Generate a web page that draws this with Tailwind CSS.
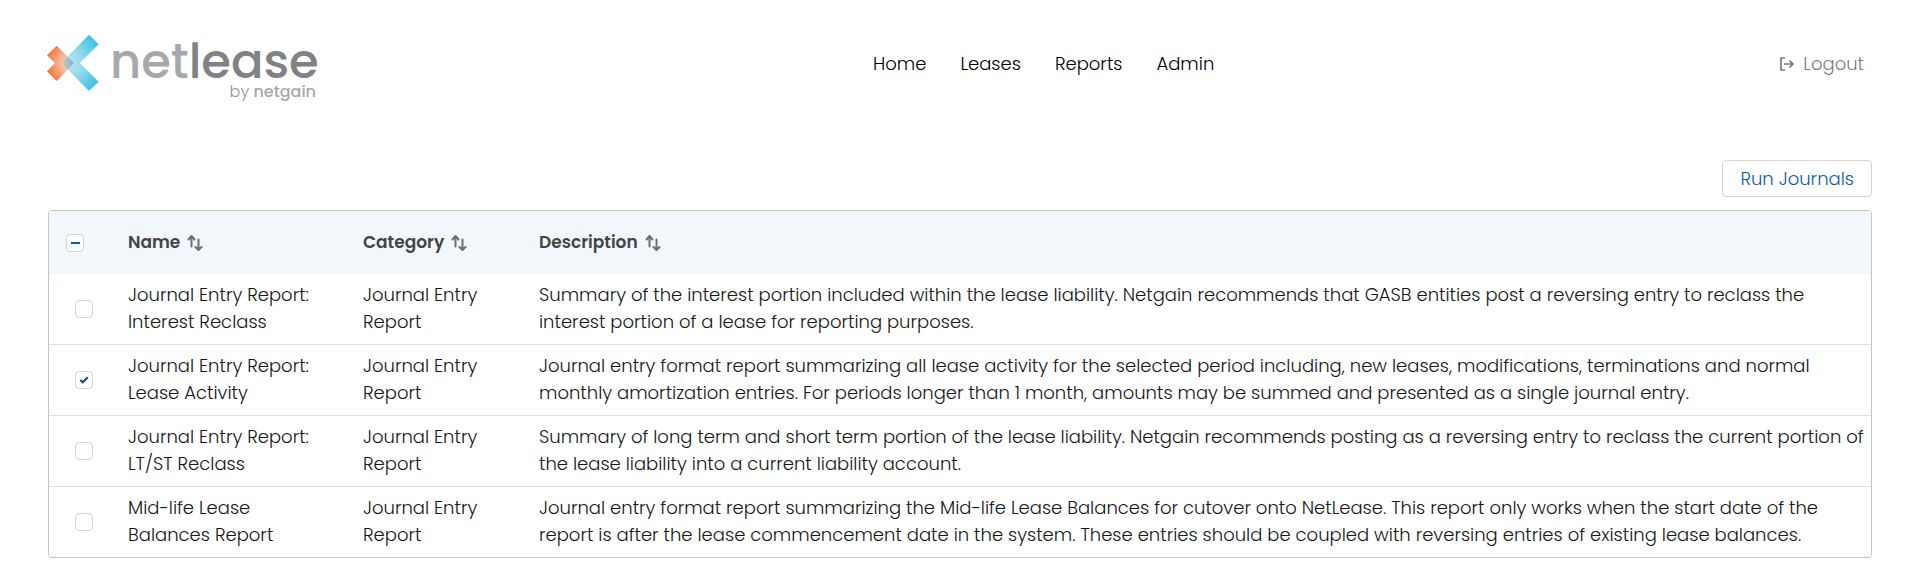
<!DOCTYPE html>
<html lang="en">
<head>
<meta charset="utf-8">
<title>NetLease Reports</title>
<script src="https://cdn.jsdelivr.net/npm/@tailwindcss/browser@4"></script>
</head>
<body class="bg-white font-[Poppins,Inter,'Open_Sans',sans-serif] text-[18px] font-light text-[#161616]">
<svg class="hidden" aria-hidden="true">
  <symbol id="sort" viewBox="0 0 18 18"><path fill="none" stroke="currentColor" stroke-width="2" stroke-linecap="round" stroke-linejoin="round" d="M5.500 12.500V2.500M2.500 5.500l3-3.500L8.500 5.500M12.500 5.500v10M9.500 13l3 3 3-3"/></symbol>
</svg>
<header class="flex h-[130px] items-center justify-between pr-14 pl-[46px]">
  <a href="#" aria-label="netlease by netgain" class="block">
    <svg width="272" height="74" viewBox="46 28 272 74" class="overflow-visible">
      <defs>
        <radialGradient id="blue" gradientUnits="userSpaceOnUse" cx="67" cy="63" r="34"><stop offset="0" stop-color="#b9e6f1"/><stop offset=".4" stop-color="#9bdcec"/><stop offset="1" stop-color="#48c4e8"/></radialGradient>
        <radialGradient id="orange" gradientUnits="userSpaceOnUse" cx="70" cy="63" r="25"><stop offset="0" stop-color="#fbd5c3"/><stop offset=".4" stop-color="#f8b595"/><stop offset="1" stop-color="#f36d2f"/></radialGradient>
        <linearGradient id="mix" x1="0" x2="1"><stop offset="0" stop-color="#dcc4b8"/><stop offset="1" stop-color="#7fb4c4"/></linearGradient>
      </defs>
      <path fill="url(#orange)" d="M56.700 45.700 74 63 56.700 81 47 71.300 55 63 47 55.300Z"/>
      <path fill="url(#blue)" d="M89 34.700 98.700 44.300 79.700 63 98.700 81.700 89 91 61.300 63Z"/>
      <path fill="url(#mix)" d="M67.700 56.700 74 63 67.700 69.500 61.300 63Z"/>
      <text x="110" y="78" font-size="48" font-weight="500" fill="#a6a9ac">net<tspan fill="#808285">lease</tspan></text>
      <text x="316" y="97" text-anchor="end" font-size="16" font-weight="300" fill="#939598">by <tspan font-weight="500" fill="#a6a9ac">netgain</tspan></text>
    </svg>
  </a>
  <nav class="flex gap-[34px] pr-2.5 pb-[3px] text-black">
    <a href="#">Home</a><a href="#">Leases</a><a href="#">Reports</a><a href="#">Admin</a>
  </nav>
  <a href="#" class="flex items-center gap-2 pb-[3px] text-[#7c7c7c]">
    <svg width="16" height="16" viewBox="0 0 16 16" fill="none" stroke="currentColor" stroke-width="1.700"><path d="M6 2H2v12h4M5 8h9M10.500 4.500 14 8l-3.500 3.500"/></svg>
    Logout
  </a>
</header>
<main class="px-12 pt-[30px]">
  <div class="flex justify-end">
    <button type="button" class="h-[37px] rounded border border-[#d4d4d4] px-[17px] pb-[1px] text-[#0a5cad]">Run Journals</button>
  </div>
  <div class="mt-[13px] overflow-hidden rounded border border-[#c4c4c4]">
    <table class="w-full table-fixed border-collapse text-left leading-[27px]">
      <colgroup><col class="w-[63px]"><col class="w-[235px]"><col class="w-[176px]"><col></colgroup>
      <thead class="h-[63px] bg-[#f2f7fb] text-[17px] text-[#444]">
        <tr>
          <th class="pl-[17px]"><label class="relative grid size-[18px] place-items-center"><input type="checkbox" aria-label="Select all reports" class="absolute inset-0 appearance-none rounded border border-[#d4d4d4] bg-white"><span class="relative h-[2px] w-[9px] bg-[#0a5cad]"></span></label></th>
          <th class="pl-4 font-semibold"><button type="button" class="flex items-center gap-1.5">Name <svg class="size-[18px] text-[#706e6b]"><use href="#sort"/></svg></button></th>
          <th class="pl-4 font-semibold"><button type="button" class="flex items-center gap-1.5">Category <svg class="size-[18px] text-[#706e6b]"><use href="#sort"/></svg></button></th>
          <th class="pl-4 font-semibold"><button type="button" class="flex items-center gap-1.5">Description <svg class="size-[18px] text-[#706e6b]"><use href="#sort"/></svg></button></th>
        </tr>
      </thead>
      <tbody class="divide-y divide-[#e0e0e0]">
        <tr>
          <td class="pl-[26px]"><input type="checkbox" aria-label="Select Interest Reclass" class="block size-[18px] appearance-none rounded border border-[#d4d4d4]"></td>
          <td class="pt-[7px] pb-[9px] pl-4">Journal Entry Report:<br>Interest Reclass</td>
          <td class="pt-[7px] pb-[9px] pl-4">Journal Entry<br>Report</td>
          <td class="pt-[7px] pb-[9px] pl-4">Summary of the interest portion included within the lease liability. Netgain recommends that GASB entities post a reversing entry to reclass the<br>interest portion of a lease for reporting purposes.</td>
        </tr>
        <tr>
          <td class="pl-[26px]"><label class="relative grid size-[18px] place-items-center"><input type="checkbox" checked aria-label="Select Lease Activity" class="absolute inset-0 appearance-none rounded border border-[#d4d4d4]"><svg class="relative" width="10" height="8" viewBox="0 0 10 8"><path d="M1.200 4 3.800 6.300 8.800 1.200" fill="none" stroke="#0b4f94" stroke-width="2.200"/></svg></label></td>
          <td class="pt-[7px] pb-[9px] pl-4">Journal Entry Report:<br>Lease Activity</td>
          <td class="pt-[7px] pb-[9px] pl-4">Journal Entry<br>Report</td>
          <td class="pt-[7px] pb-[9px] pl-4">Journal entry format report summarizing all lease activity for the selected period including, new leases, modifications, terminations and normal<br>monthly amortization entries. For periods longer than 1 month, amounts may be summed and presented as a single journal entry.</td>
        </tr>
        <tr>
          <td class="pl-[26px]"><input type="checkbox" aria-label="Select LT/ST Reclass" class="block size-[18px] appearance-none rounded border border-[#d4d4d4]"></td>
          <td class="pt-[7px] pb-[9px] pl-4">Journal Entry Report:<br>LT/ST Reclass</td>
          <td class="pt-[7px] pb-[9px] pl-4">Journal Entry<br>Report</td>
          <td class="pt-[7px] pb-[9px] pl-4">Summary of long term and short term portion of the lease liability. Netgain recommends posting as a reversing entry to reclass the current portion of<br>the lease liability into a current liability account.</td>
        </tr>
        <tr>
          <td class="pl-[26px]"><input type="checkbox" aria-label="Select Mid-life Lease Balances Report" class="block size-[18px] appearance-none rounded border border-[#d4d4d4]"></td>
          <td class="pt-[7px] pb-[9px] pl-4">Mid-life Lease<br>Balances Report</td>
          <td class="pt-[7px] pb-[9px] pl-4">Journal Entry<br>Report</td>
          <td class="pt-[7px] pb-[9px] pl-4">Journal entry format report summarizing the Mid-life Lease Balances for cutover onto NetLease. This report only works when the start date of the<br>report is after the lease commencement date in the system. These entries should be coupled with reversing entries of existing lease balances.</td>
        </tr>
      </tbody>
    </table>
  </div>
</main>
</body>
</html>
